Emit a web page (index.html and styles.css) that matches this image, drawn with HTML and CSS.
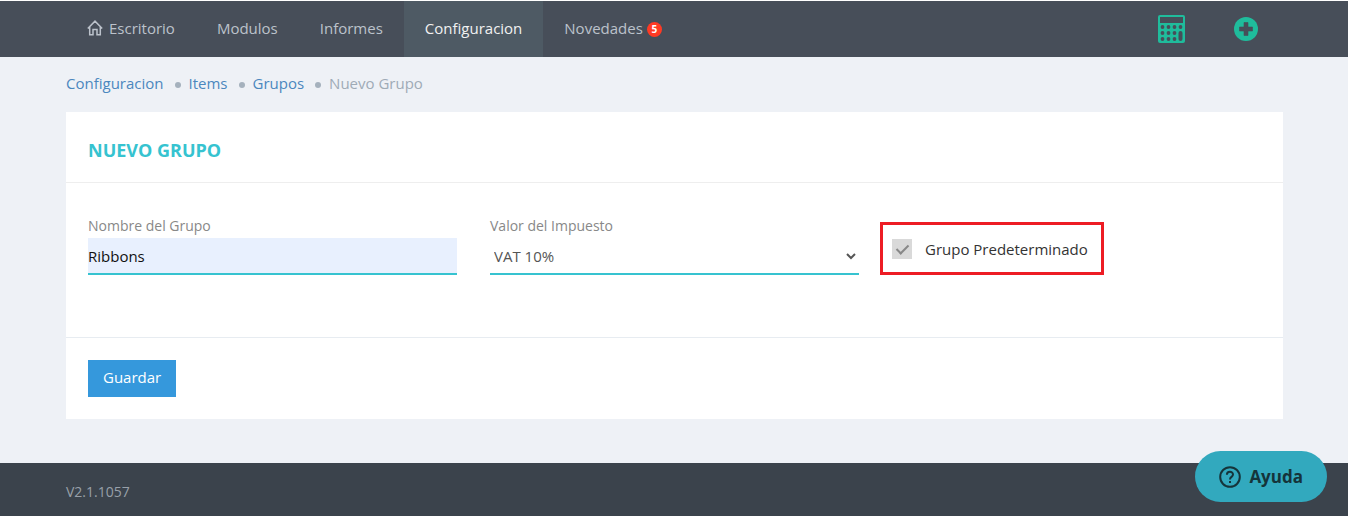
FILE: index.html
```html
<!DOCTYPE html>
<html lang="es">
<head>
<meta charset="UTF-8" />
<meta name="viewport" content="width=device-width, initial-scale=1.0" />
<title>Nuevo Grupo</title>
<link rel="stylesheet" href="styles.css">
</head>
<body>
  <header class="top-menu">
    <nav class="main-nav">
      <a href="#">
        <svg class="icon-home" viewBox="0 0 16 16" width="16" height="16" fill="none" stroke="currentColor" stroke-width="1.5">
          <path d="M0.8 8.6 L8 1.2 L15.2 8.6 M2.7 7 V14.8 H6 V9.6 H10 V14.8 H13.3 V7" />
        </svg>
        Escritorio
      </a>
      <a href="#">Modulos</a>
      <a href="#">Informes</a>
      <a href="#" class="active">Configuracion</a>
      <a href="#">Novedades <span class="badge">5</span></a>
    </nav>
    <div class="quick-actions">
      <button type="button" aria-label="Calculadora">
        <svg viewBox="0 0 27 28" width="27" height="28">
          <rect x="0" y="0" width="27" height="28" rx="2" fill="#1fbc9c" />
          <g fill="#474e59">
            <rect x="2" y="2" width="23" height="6" />
            <circle cx="4.5" cy="12" r="1.9" /><circle cx="10.5" cy="12" r="1.9" /><circle cx="16.5" cy="12" r="1.9" /><circle cx="22.5" cy="12" r="1.9" />
            <circle cx="4.5" cy="18" r="1.9" /><circle cx="10.5" cy="18" r="1.9" /><circle cx="16.5" cy="18" r="1.9" />
            <circle cx="4.5" cy="24" r="1.9" /><circle cx="10.5" cy="24" r="1.9" /><circle cx="16.5" cy="24" r="1.9" />
            <rect x="20.5" y="16" width="4" height="10" rx="2" />
          </g>
        </svg>
      </button>
      <button type="button" aria-label="Agregar">
        <svg viewBox="0 0 24 24" width="24" height="24">
          <circle cx="12" cy="12" r="12" fill="#1fbc9c" />
          <path d="M10 5.5h4V10h4.5v4H14v4.5h-4V14H5.5v-4H10z" fill="#474e59" stroke="#474e59" stroke-width="0.6" stroke-linejoin="round" />
        </svg>
      </button>
    </div>
  </header>

  <main class="page">
    <ul class="breadcrumb">
      <li><a href="#">Configuracion</a></li>
      <li><a href="#">Items</a></li>
      <li><a href="#">Grupos</a></li>
      <li>Nuevo Grupo</li>
    </ul>

    <form class="card">
      <h1>Nuevo Grupo</h1>
      <div class="form-body">
        <div class="field">
          <label for="nombre">Nombre del Grupo</label>
          <input type="text" id="nombre" value="Ribbons">
        </div>
        <div class="field">
          <label for="impuesto">Valor del Impuesto</label>
          <select id="impuesto">
            <option>VAT 10%</option>
          </select>
        </div>
        <label class="check-field">
          <input type="checkbox" checked>
          Grupo Predeterminado
        </label>
      </div>
      <div class="form-actions">
        <button type="button">Guardar</button>
      </div>
    </form>
  </main>

  <footer>V2.1.1057</footer>

  <button type="button" class="help">
    <svg viewBox="0 0 22 22" width="22" height="22" fill="none" stroke="currentColor" stroke-width="2">
      <circle cx="11" cy="11" r="9.8" />
      <path d="M7.9 8.7 C7.9 4.9 14 4.9 14 8.6 C14 11 11 10.8 11 13.4" />
      <path d="M11 14.9 V17" />
    </svg>
    Ayuda
  </button>
</body>
</html>
```
FILE: styles.css
```css
* { box-sizing: border-box; }

body {
  display: flex;
  flex-direction: column;
  min-height: 100vh;
  margin: 0;
  font-family: "Open Sans", sans-serif;
  font-size: 15px;
  line-height: 20px;
  color: #333;
  background: #eef1f6;
}

a { color: #4b87be; text-decoration: none; }
button { font-family: inherit; border: 0; cursor: pointer; }

/* Top menu */
.top-menu {
  display: flex;
  justify-content: space-between;
  padding: 0 84px 0 66px;
  background: #474e59;
  border-top: 1px solid #fff;
}
.main-nav { display: flex; }
.main-nav a {
  display: flex;
  align-items: center;
  height: 56px;
  padding: 0 21px 2px;
  color: #bcc2cb;
}
.main-nav a.active { background: #4e5a64; color: #f1f1f1; }
.icon-home { margin-right: 6px; }
.badge {
  width: 15px;
  height: 15px;
  margin: 2px 0 0 4px;
  border-radius: 50%;
  background: #ff3a24;
  color: #fff;
  font-size: 10px;
  font-weight: 700;
  line-height: 15px;
  text-align: center;
}
.quick-actions { display: flex; align-items: center; gap: 37px; }
.quick-actions button {
  display: flex;
  padding: 0 6px;
  background: none;
}

/* Content */
.page { flex: 1; padding: 0 65px 44px 66px; }
.breadcrumb {
  display: flex;
  margin: 0;
  padding: 16px 0 19px;
  list-style: none;
  color: #9fabb6;
}
.breadcrumb li { display: flex; align-items: center; }
.breadcrumb li + li::before {
  content: "";
  width: 6px;
  height: 6px;
  margin: 4px 8px 0 11px;
  border-radius: 50%;
  background: #a5b1bd;
}

.card { background: #fff; }
.card h1 {
  margin: 0;
  padding: 28px 22px 22px;
  border-bottom: 1px solid #eee;
  color: #36c3d0;
  font-size: 18px;
  font-weight: 700;
  text-transform: uppercase;
}
.form-body {
  display: grid;
  grid-template-columns: repeat(3, 1fr);
  gap: 33px;
  padding: 32px 22px 62px;
}
.field { display: flex; flex-direction: column; }
.field label { padding-bottom: 2px; font-size: 14px; line-height: 21px; color: #888; }
.field input, .field select {
  height: 37px;
  border: 0;
  border-bottom: 2px solid #36c3d0;
  font: inherit;
}
.field input { padding: 0; background: #e8f0fe; color: #111; }
.field select { padding: 0 2px 0 0; background: #fff; color: #555; }

.check-field {
  display: flex;
  align-items: center;
  justify-self: start;
  align-self: start;
  height: 53px;
  margin: 7px 0 0 -12px;
  padding: 0 13px 0 9px;
  border: 3px solid #ed1c24;
}
.check-field input {
  appearance: none;
  position: relative;
  width: 20px;
  height: 20px;
  margin: 0 13px 0 0;
  background: #d9d9d9;
}
.check-field input:checked::after {
  content: "";
  position: absolute;
  top: 3px;
  left: 7px;
  width: 5px;
  height: 10px;
  border: solid #888;
  border-width: 0 2px 2px 0;
  transform: rotate(45deg);
}

.form-actions { padding: 22px; border-top: 1px solid #e7ecf1; }
.form-actions button {
  height: 37px;
  padding: 0 15px 3px;
  background: #3598dc;
  color: #fff;
  font-size: 15px;
}

footer {
  padding: 19px 66px 14px;
  background: #3b434c;
  color: #98a0a9;
  font-size: 14px;
}

/* Floating help button */
.help {
  position: fixed;
  right: 21px;
  bottom: 14px;
  display: flex;
  align-items: center;
  gap: 8px;
  height: 51px;
  padding: 0 24px;
  border-radius: 26px;
  background: #32a9be;
  color: #15343a;
  font-size: 17px;
  font-weight: 700;
}
```
